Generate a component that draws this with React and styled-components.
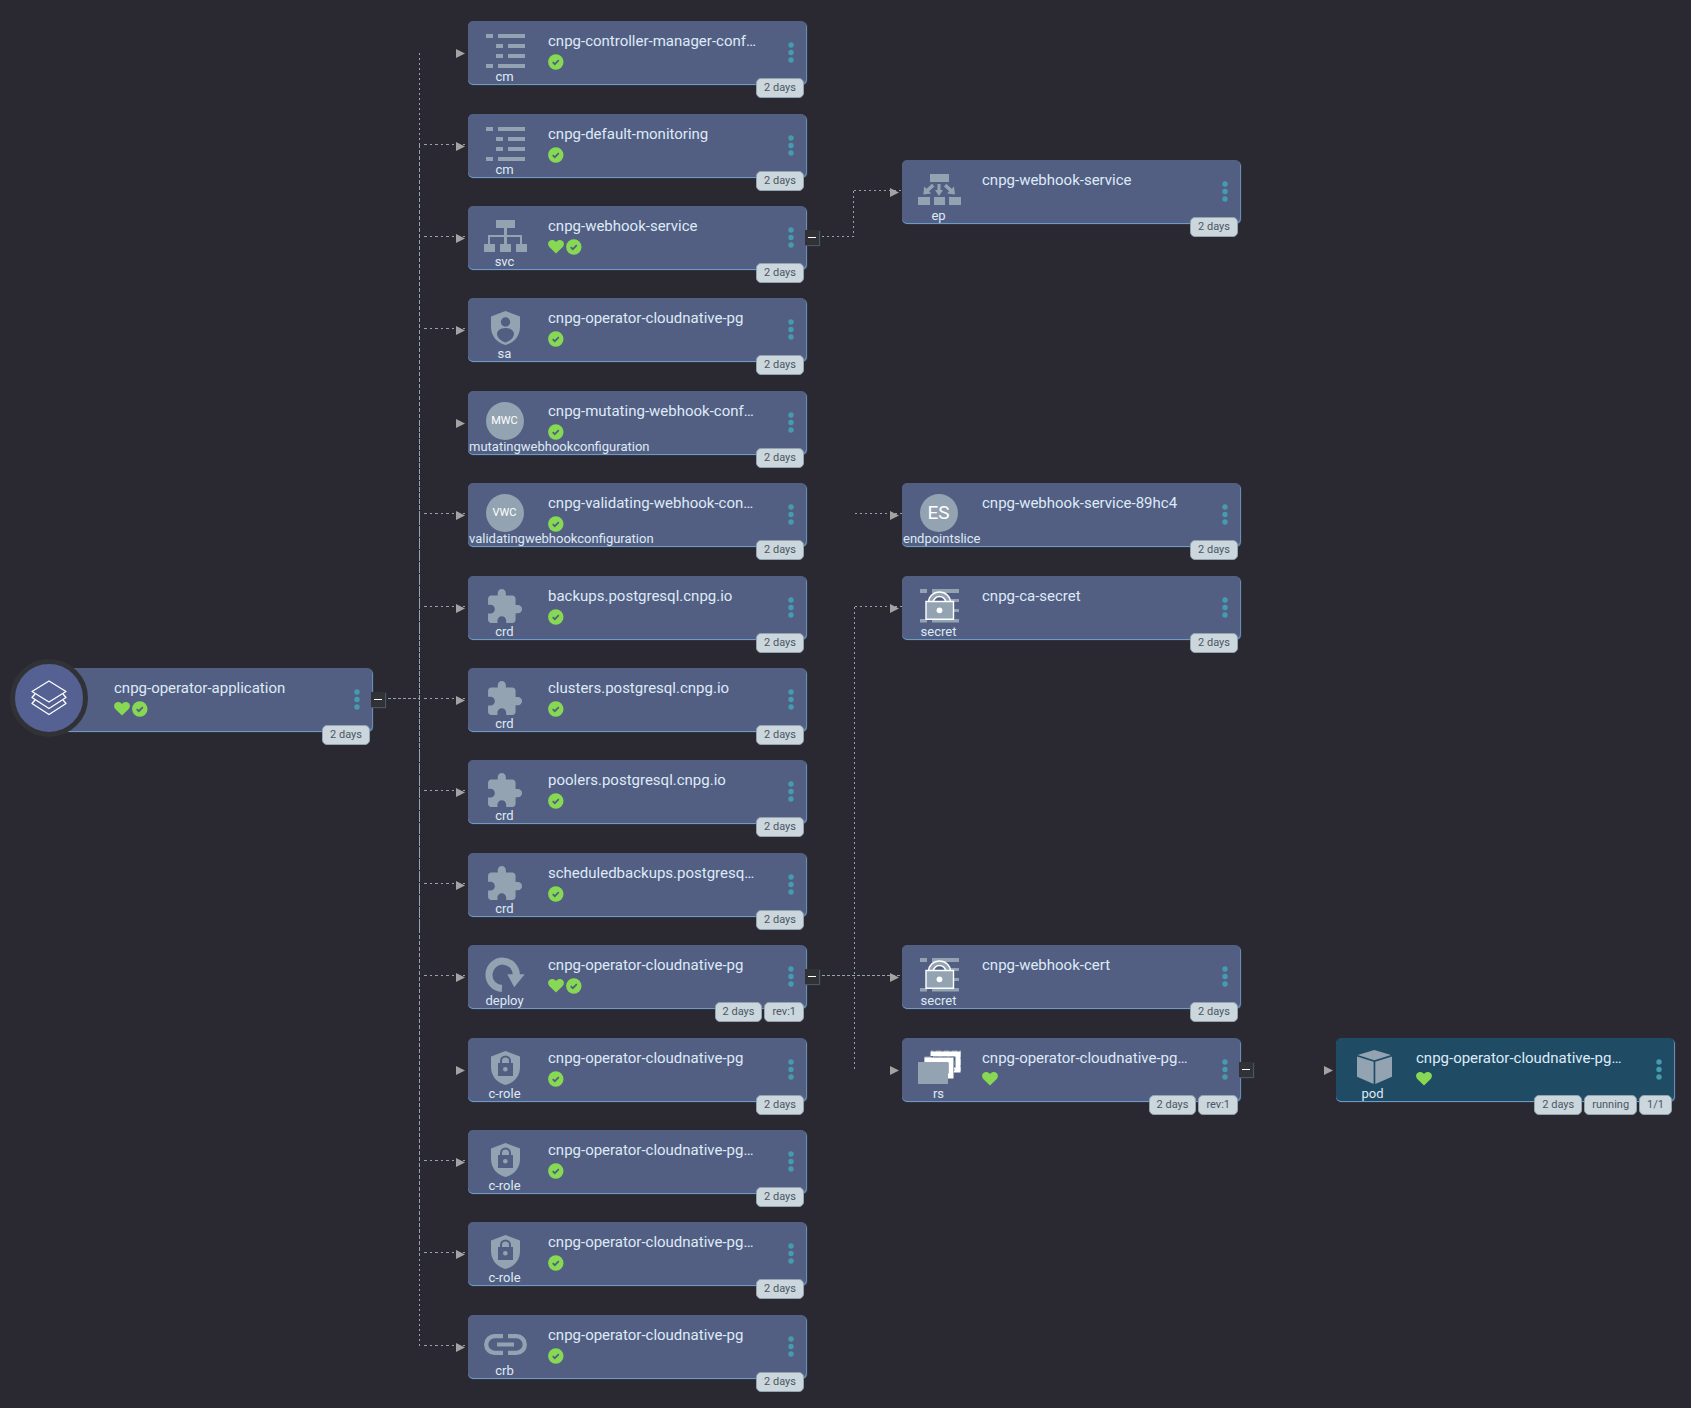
import React from "react";
import styled, { createGlobalStyle } from "styled-components";

const GlobalStyle = createGlobalStyle`
  * { box-sizing: border-box; }
  body {
    margin: 0;
    background: #2a2931;
    font-family: Roboto, "Liberation Sans", sans-serif;
  }
`;

const GREY = "#93a3b1";

const Canvas = styled.main`
  position: relative;
  min-height: 100vh;
  overflow: hidden;
`;

const Connectors = styled.svg`
  position: absolute;
  inset: 0;
  width: 100%;
  height: 100%;
  fill: none;
  stroke: #93a3b1;
  stroke-width: 1;
  shape-rendering: crispEdges;
`;

const NodeCard = styled.article`
  --card: ${(p) => (p.$tone === "pod" ? "#1f4c64" : "#525f82")};
  position: absolute;
  left: ${(p) => p.$x}px;
  top: ${(p) => p.$y}px;
  display: flex;
  width: 338px;
  height: 63px;
  border-radius: 5px;
  background: var(--card);
  box-shadow: 0 1px 0 #6d9ac6, 1px 1px 1px #6d9ac6;
`;

const Kind = styled.div`
  flex: none;
  width: 72px;
  padding: 11px 0 0 1px;
  color: #dfe9f6;
  font-size: 13px;
  line-height: 14px;
  text-align: center;
  white-space: nowrap;
`;

const Glyph = styled.div`
  display: flex;
  justify-content: center;
  height: 38px;
`;

const GlyphSvg = styled.svg`
  width: 44px;
  height: 36px;
  margin-top: 2px;
  overflow: visible;
  fill: ${GREY};
`;

const Initials = styled.span`
  display: flex;
  align-items: center;
  justify-content: center;
  width: 38px;
  height: 38px;
  border-radius: 50%;
  background: ${GREY};
  color: #fff;
  font-size: ${(p) => (p.$long ? 11 : 19)}px;
`;

const Info = styled.div`
  flex: 1;
  min-width: 0;
  padding: 10px 0 0 8px;
`;

const Title = styled.h2`
  margin: 0 0 3px;
  color: #dfeaf8;
  font-size: 15px;
  font-weight: 400;
  line-height: 20px;
  white-space: nowrap;
`;

const StatusRow = styled.div`
  display: flex;
  gap: 2px;
  svg { width: 16px; height: 16px; }
`;

const MenuButton = styled.button`
  display: flex;
  flex: none;
  align-items: center;
  justify-content: center;
  width: 30px;
  padding: 0;
  border: 0;
  background: none;
  fill: #459cb0;
`;

const Tags = styled.div`
  position: absolute;
  right: 2px;
  top: 57px;
  display: flex;
  gap: 2px;
`;

const Tag = styled.span`
  height: 20px;
  padding: 0 7px;
  border: 1px solid #93a3b1;
  border-radius: 5px;
  background: #ccd6dd;
  color: #495763;
  font-size: 11px;
  line-height: 17px;
  white-space: nowrap;
`;

const Expander = styled.button`
  position: absolute;
  right: -13px;
  top: 24px;
  display: flex;
  align-items: center;
  justify-content: center;
  width: 14px;
  height: 15px;
  padding: 0;
  border: 0;
  background: #303236;
  box-shadow: 1px 1px 1px #495763;
  &::before {
    content: "";
    width: 8px;
    height: 1px;
    background: #fff;
  }
`;

const AppBadge = styled.div`
  position: absolute;
  left: -24px;
  top: -9px;
  display: flex;
  align-items: center;
  justify-content: center;
  width: 78px;
  height: 78px;
  border: 5px solid #303236;
  border-radius: 50%;
  background: #546192;
`;

const glyphs = {
  cm: (
    <path d="M3 0h7v4H3zM15 0h27v4H15zM13 10h7v4h-7zM25 10h17v4H25zM13 20h7v4h-7zM25 20h17v4H25zM3 30h7v4H3zM15 30h27v4H15z" />
  ),
  svc: (
    <path d="M13 1h19v8h-8v7h15v9h5v8H33v-8h4v-7H24v7h4v8H17v-8h4v-7H7v7h5v8H1v-8h4v-9h16V9h-8z" />
  ),
  ep: (
    <>
      <path d="M13 1h19v8H13zM1 24h12v8H1zM17 24h11v8H17zM32 24h12v8H32z" />
      <path d="M20.5 11h3v6H26l-4 6-4-6h2.5zM6.300 21.500l1-8 2.300 2.200 5.400-4.900 2.400 2.600-5.300 4.800 2.200 2.200zM38 21.500l-1-8-2.300 2.200-5.400-4.900-2.400 2.600 5.300 4.800-2.200 2.200z" />
    </>
  ),
  sa: (
    <path
      fillRule="evenodd"
      d="M22.5 0L37 5.500V16C37 25 31 32 22.500 34 14 32 8 25 8 16V5.500zM22.500 6.300a4.700 4.700 0 1 0 0 9.400 4.700 4.700 0 0 0 0-9.400zM22.500 17C17 17 14 20 14 23c0 3.500 4.500 7.500 8.500 8.500 4-1 8.500-5 8.500-8.500 0-3-3-6-8.500-6z"
    />
  ),
  crd: (
    <path
      transform="translate(1.8 -1.7) scale(1.62)"
      d="M20.5 11H19V7c0-1.1-.9-2-2-2h-4V3.500C13 2.120 11.880 1 10.500 1S8 2.120 8 3.500V5H4c-1.100 0-1.990.9-1.990 2v3.800H3.500c1.490 0 2.700 1.210 2.700 2.700s-1.210 2.700-2.700 2.700H2V20c0 1.100.9 2 2 2h3.800v-1.500c0-1.490 1.210-2.700 2.700-2.700 1.490 0 2.700 1.210 2.700 2.700V22H17c1.100 0 2-.9 2-2v-4h1.500c1.380 0 2.500-1.120 2.500-2.500S21.880 11 20.500 11z"
    />
  ),
  secret: (
    <>
      <path d="M3 0h7v4H3zM15 0h27v4H15zM32 10h10v3H32zM32 20h10v3H32zM3 30h7v3.500H3zM15 30h27v3.500H15z" />
      <path d="M11.500 13.500a11 10.500 0 0 1 22 0z" stroke="#fff" strokeWidth="1.4" />
      <path d="M16.500 13a6 5.500 0 0 1 12 0z" fill="var(--card)" stroke="#fff" strokeWidth="1.4" />
      <path d="M9 12.500h27.500v17.700H9z" stroke="#fff" strokeWidth="1.4" />
      <circle cx="22.5" cy="21.3" r="2.9" fill="#fff" />
    </>
  ),
  deploy: (
    <>
      <path d="M19 30.500A13.700 13.700 0 1 1 33.300 18" fill="none" stroke={GREY} strokeWidth="7" />
      <path d="M24.300 16.300h17.400l-10.500 13z" />
    </>
  ),
  "c-role": (
    <>
      <path d="M22.5 0L37 5.500V16C37 25 31 32 22.500 34 14 32 8 25 8 16V5.500z" />
      <path d="M15 12h15v13H15z" fill="var(--card)" />
      <path d="M18 12.500v-2.500a4.500 4.500 0 0 1 9 0v2.500" fill="none" stroke="var(--card)" strokeWidth="2" />
      <circle cx="22.3" cy="18.3" r="2.3" />
    </>
  ),
  rs: (
    <>
      <path d="M15 5V.5h28V19h-5" fill="none" stroke={GREY} strokeWidth="2" strokeDasharray="6 2" />
      <path d="M16 5V3h25v16h-4" fill="none" stroke="#fff" strokeWidth="5" />
      <path d="M8.500 11V6.500h6" fill="none" stroke={GREY} strokeWidth="2" />
      <path d="M10 11V9h24v16h-3" fill="none" stroke="#fff" strokeWidth="5" />
      <path d="M17 5.700h20V20" fill="none" stroke={GREY} strokeWidth="1" strokeDasharray="5 3" />
      <path d="M1 11h30v22H1z" />
    </>
  ),
  pod: (
    <path d="M23.3-1L40 4 23.300 9.300 6.700 4zM6 5.500l16.600 5.200V33L6 25.700zM24.300 10.700L41 5.500v20.200L24.300 33z" />
  ),
  crb: (
    <>
      <path
        d="M20 8.200h-8.500a8.300 8.300 0 0 0 0 16.600H20M25 8.200h8.500a8.300 8.300 0 0 1 0 16.600H25"
        fill="none"
        stroke={GREY}
        strokeWidth="4.3"
      />
      <path d="M14 14.500h17v4H14z" />
    </>
  ),
};

const initials = {
  mutatingwebhookconfiguration: "MWC",
  validatingwebhookconfiguration: "VWC",
  endpointslice: "ES",
};

const Heart = () => (
  <svg viewBox="0 0 16 16" role="img" aria-label="Healthy">
    <path
      fill="#87d953"
      d="M8 14.500L1.300 8C-.4 6.200-.3 3.400 1.500 2c1.800-1.400 4.400-1.100 6 .6l.5.5.5-.5c1.600-1.700 4.200-2 6-.6 1.800 1.400 1.900 4.200.2 6z"
    />
  </svg>
);

const Synced = () => (
  <svg viewBox="0 0 16 16" role="img" aria-label="Synced">
    <circle cx="7.8" cy="8" r="7.7" fill="#87d953" />
    <path d="M4.700 8.200l2.100 2 4-4" fill="none" stroke="var(--card)" strokeWidth="1.7" />
  </svg>
);

const LayersIcon = () => (
  <svg width="36" height="36" viewBox="0 0 36 36" fill="none" stroke="#fff" strokeWidth="1.3" strokeLinejoin="round">
    <path d="M18 1L35 11.500 18 22 1 11.500z" />
    <path d="M4 14L1 17.500 18 28.500l17-11-3-3.500" />
    <path d="M4 20L1 23.500 18 34.500l17-11-3-3.500" />
  </svg>
);

// h = healthy, s = synced
const nodes = [
  { x: 34, y: 668, kind: "application", title: "cnpg-operator-application", status: "hs", expand: true },
  { x: 468, y: 21, kind: "cm", title: "cnpg-controller-manager-conf…", status: "s" },
  { x: 468, y: 114, kind: "cm", title: "cnpg-default-monitoring", status: "s" },
  { x: 468, y: 206, kind: "svc", title: "cnpg-webhook-service", status: "hs", expand: true },
  { x: 468, y: 298, kind: "sa", title: "cnpg-operator-cloudnative-pg", status: "s" },
  { x: 468, y: 391, kind: "mutatingwebhookconfiguration", title: "cnpg-mutating-webhook-conf…", status: "s" },
  { x: 468, y: 483, kind: "validatingwebhookconfiguration", title: "cnpg-validating-webhook-con…", status: "s" },
  { x: 468, y: 576, kind: "crd", title: "backups.postgresql.cnpg.io", status: "s" },
  { x: 468, y: 668, kind: "crd", title: "clusters.postgresql.cnpg.io", status: "s" },
  { x: 468, y: 760, kind: "crd", title: "poolers.postgresql.cnpg.io", status: "s" },
  { x: 468, y: 853, kind: "crd", title: "scheduledbackups.postgresq…", status: "s" },
  { x: 468, y: 945, kind: "deploy", title: "cnpg-operator-cloudnative-pg", status: "hs", tags: ["rev:1"], expand: true },
  { x: 468, y: 1038, kind: "c-role", title: "cnpg-operator-cloudnative-pg", status: "s" },
  { x: 468, y: 1130, kind: "c-role", title: "cnpg-operator-cloudnative-pg…", status: "s" },
  { x: 468, y: 1222, kind: "c-role", title: "cnpg-operator-cloudnative-pg…", status: "s" },
  { x: 468, y: 1315, kind: "crb", title: "cnpg-operator-cloudnative-pg", status: "s" },
  { x: 902, y: 160, kind: "ep", title: "cnpg-webhook-service", status: "" },
  { x: 902, y: 483, kind: "endpointslice", title: "cnpg-webhook-service-89hc4", status: "" },
  { x: 902, y: 576, kind: "secret", title: "cnpg-ca-secret", status: "" },
  { x: 902, y: 945, kind: "secret", title: "cnpg-webhook-cert", status: "" },
  { x: 902, y: 1038, kind: "rs", title: "cnpg-operator-cloudnative-pg…", status: "h", tags: ["rev:1"], expand: true },
  { x: 1336, y: 1038, kind: "pod", title: "cnpg-operator-cloudnative-pg…", status: "h", tags: ["running", "1/1"] },
];

// [x1, y1, x2, y2, dash pattern]
const lines = [
  [419, 52, 419, 143, "2 3"],
  [419, 143, 419, 420, "4 2"],
  [419, 420, 419, 513, "5 1"],
  [419, 513, 419, 628, "11 1"],
  [419, 628, 419, 750, "5 1"],
  [419, 750, 419, 928, "11 1"],
  [419, 928, 419, 1253, "4 2"],
  [419, 1253, 419, 1345, "2 3"],
  [387, 698, 419, 698, "3 2"],
  [821, 236, 853, 236, "2 3"],
  [853, 190, 853, 236, "2 3"],
  [853, 190, 902, 190, "2 3"],
  [854, 513, 902, 513, "2 3"],
  [854, 606, 902, 606, "2 3"],
  [854, 606, 854, 1068, "2 3"],
  [821, 975, 902, 975, "3 2"],
  ...[114, 206, 298, 483, 576, 668, 760, 853, 945, 1130, 1222, 1315].map((y) => [423, y + 30, 468, y + 30, "3 3 2 3"]),
];

function Node({ x, y, kind, title, status, tags = [], expand }) {
  return (
    <NodeCard $x={x} $y={y} $tone={kind}>
      <Kind>
        {kind === "application" ? (
          <AppBadge>
            <LayersIcon />
          </AppBadge>
        ) : (
          <>
            <Glyph>
              {initials[kind] ? (
                <Initials $long={initials[kind].length > 2}>{initials[kind]}</Initials>
              ) : (
                <GlyphSvg viewBox="0 0 44 36" aria-hidden="true">
                  {glyphs[kind]}
                </GlyphSvg>
              )}
            </Glyph>
            {kind}
          </>
        )}
      </Kind>
      <Info>
        <Title>{title}</Title>
        <StatusRow>
          {status.includes("h") && <Heart />}
          {status.includes("s") && <Synced />}
        </StatusRow>
      </Info>
      <MenuButton type="button" aria-label={`Actions for ${title}`}>
        <svg width="6" height="21" viewBox="0 0 6 21">
          <circle cx="3" cy="3" r="2.7" />
          <circle cx="3" cy="10.5" r="2.7" />
          <circle cx="3" cy="18" r="2.7" />
        </svg>
      </MenuButton>
      <Tags>
        {["2 days", ...tags].map((tag) => (
          <Tag key={tag}>{tag}</Tag>
        ))}
      </Tags>
      {expand && <Expander type="button" aria-label={`Collapse ${title}`} />}
    </NodeCard>
  );
}

export default function App() {
  return (
    <Canvas>
      <GlobalStyle />
      <Connectors aria-hidden="true">
        {lines.map(([x1, y1, x2, y2, dash]) => (
          <path key={`${x1}-${y1}-${x2}-${y2}`} d={`M${x1} ${y1}L${x2} ${y2}`} transform="translate(.5 .5)" strokeDasharray={dash} />
        ))}
        {nodes
          .filter((n) => n.kind !== "application")
          .map((n) => (
            <path
              key={`${n.x}-${n.y}`}
              d={`M${n.x - 12} ${n.y + 28}l9 4.500-9 4.500z`}
              fill="#a3a3a3"
              stroke="none"
              shapeRendering="auto"
            />
          ))}
      </Connectors>
      {nodes.map((n) => (
        <Node key={`${n.x}-${n.y}`} {...n} />
      ))}
    </Canvas>
  );
}
